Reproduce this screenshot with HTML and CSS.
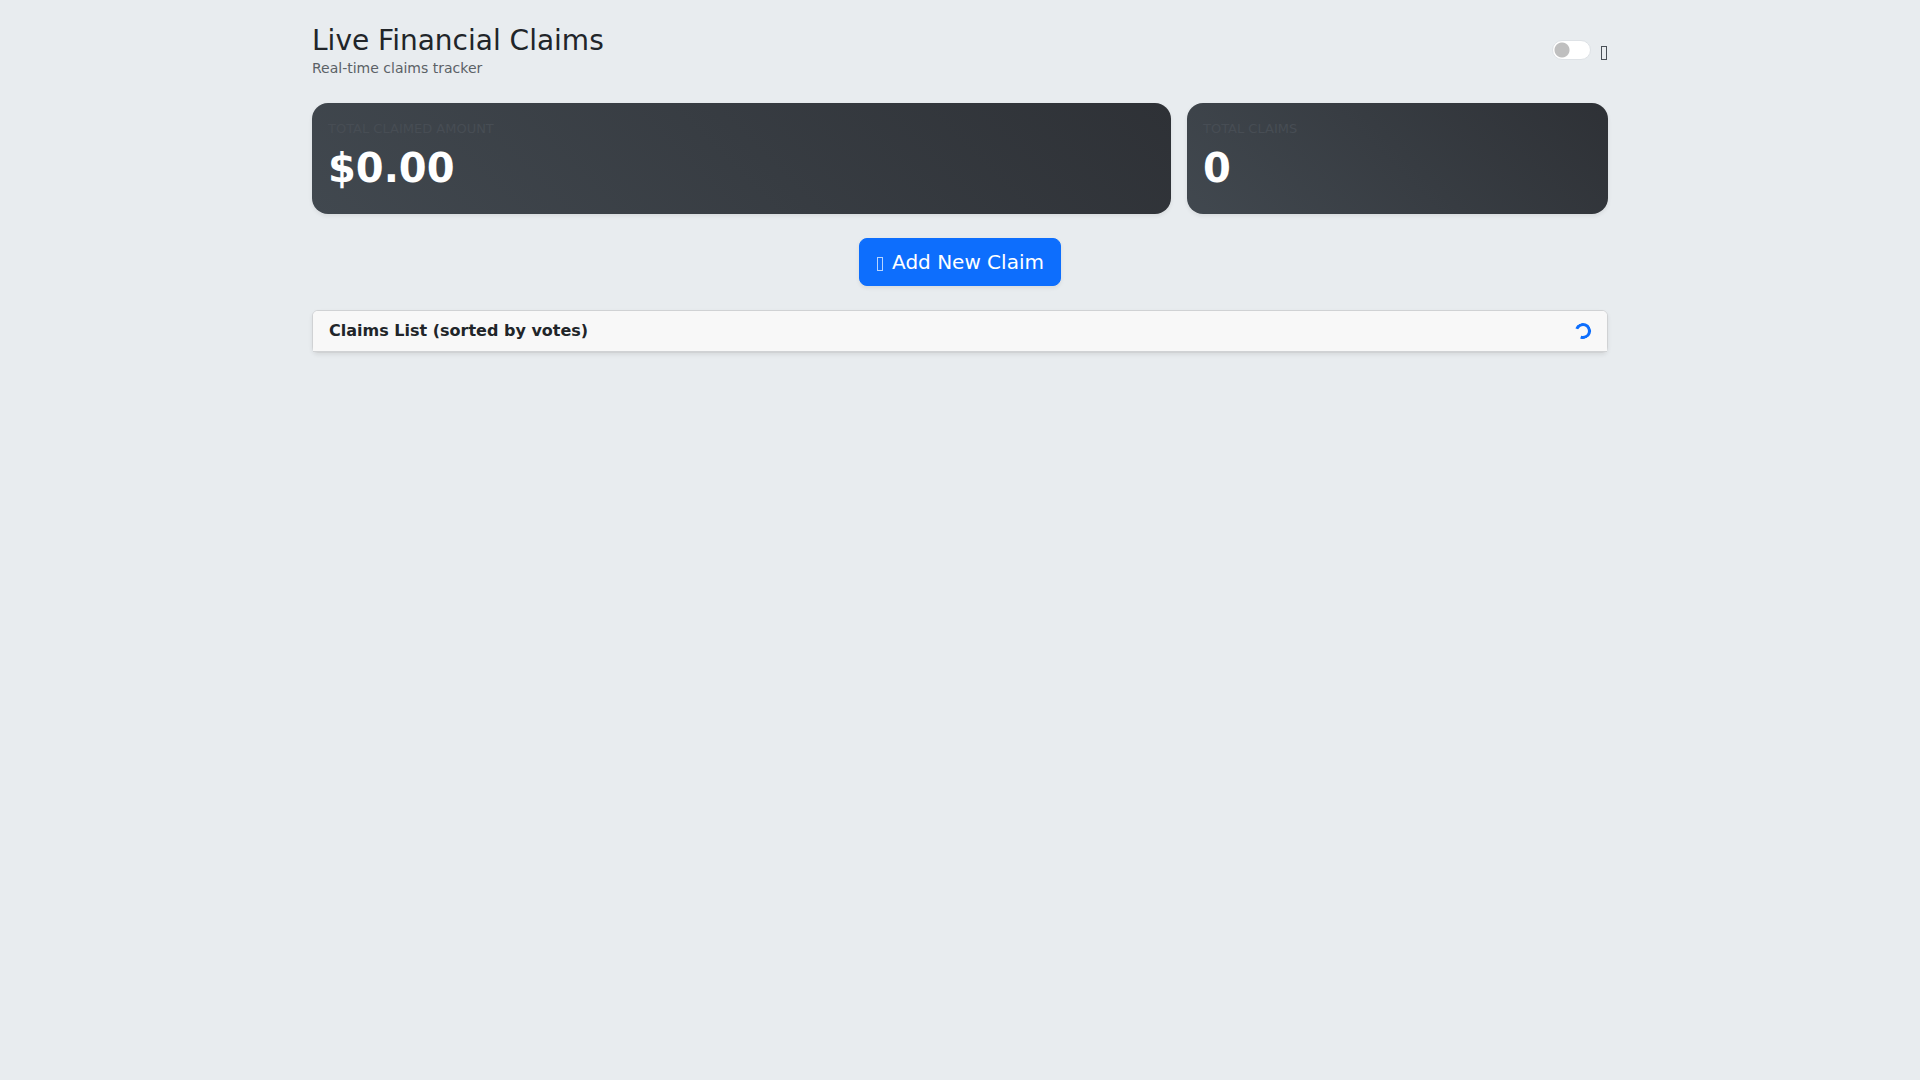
FILE: index.html
```
<!DOCTYPE html>
<html lang="en">
<head>
  <meta charset="UTF-8">
  <meta name="viewport" content="width=device-width, initial-scale=1.0">
  <title>Live Financial Claims</title>
  <link rel="stylesheet" href="styles.css">
</head>
<body>
  <div class="container">
    <header class="page-header">
      <div>
        <h1>Live Financial Claims</h1>
        <p class="subtitle">Real-time claims tracker</p>
      </div>
      <div class="theme-switch">
        <input type="checkbox" role="switch" id="theme-toggle" aria-label="Dark mode">
        <label for="theme-toggle">
          <svg class="icon" width="7" height="14" viewBox="0 0 7 14"><rect x="0.5" y="0.5" width="5" height="13" fill="none" stroke="currentColor"/></svg>
        </label>
      </div>
    </header>

    <main>
      <section class="stats">
        <div class="stat-card">
          <div class="stat-label">TOTAL CLAIMED AMOUNT</div>
          <div class="stat-value" id="total-amount">$0.00</div>
        </div>
        <div class="stat-card">
          <div class="stat-label">TOTAL CLAIMS</div>
          <div class="stat-value" id="total-claims">0</div>
        </div>
      </section>

      <div class="actions">
        <button type="button" class="btn-add">
          <svg class="icon" width="8" height="14" viewBox="0 0 8 14"><rect x="1.5" y="0.5" width="5" height="13" fill="none" stroke="currentColor" stroke-opacity="0.7"/></svg>
          Add New Claim
        </button>
      </div>

      <section class="claims-card">
        <div class="claims-header">
          <h2>Claims List (sorted by votes)</h2>
          <div class="spinner" role="status" aria-label="Loading"></div>
        </div>
        <div id="claims-list"></div>
      </section>
    </main>
  </div>
</body>
</html>
```

FILE: styles.css
```
* {
  box-sizing: border-box;
}
body {
  margin: 0;
  min-height: 100vh;
  font-family: "DejaVu Sans", sans-serif;
  font-size: 16px;
  line-height: 24px;
  color: #212529;
  background-color: #e8ecef;
}
h1, h2, p {
  margin: 0;
}
.container {
  max-width: 1320px;
  margin: 0 auto;
  padding: 24px 12px;
}
.icon {
  display: block;
}

/* Header */
.page-header {
  display: flex;
  justify-content: space-between;
  align-items: center;
  margin-bottom: 24px;
}
h1 {
  font-size: 28px;
  font-weight: 400;
  line-height: 34px;
}
.subtitle {
  font-size: 14px;
  line-height: 21px;
  color: #5b6166;
}
.theme-switch {
  display: flex;
  align-items: flex-end;
  gap: 10px;
  padding-bottom: 3px;
}
.theme-switch input {
  appearance: none;
  width: 39px;
  height: 20px;
  margin: 0;
  border: 1px solid #dee2e6;
  border-radius: 20px;
  background: #fff radial-gradient(circle at 9px 9px, #bfbfbf 7px, transparent 8px) no-repeat;
  cursor: pointer;
}
.theme-switch input:checked {
  background: #0d6efd radial-gradient(circle at 28px 9px, #fff 7px, transparent 8px) no-repeat;
}
.theme-switch label {
  color: #495057;
}

/* Totals */
.stats {
  display: grid;
  grid-template-columns: 859fr 421fr;
  gap: 16px;
  margin-bottom: 24px;
}
.stat-card {
  padding: 16px;
  border-radius: 16px;
  color: #fff;
  background: linear-gradient(45deg, #41484f, #2e3136);
  box-shadow: 0 2px 4px rgba(0, 0, 0, 0.075);
}
.stat-label {
  font-size: 13px;
  line-height: 19px;
  color: #474d54;
}
.stat-value {
  font-size: 40px;
  font-weight: 700;
  line-height: 60px;
}

/* Add button */
.actions {
  display: flex;
  justify-content: center;
  margin-bottom: 24px;
}
.btn-add {
  display: flex;
  align-items: center;
  gap: 8px;
  padding: 8px 16px;
  border: 1px solid #0d6efd;
  border-radius: 8px;
  font-family: inherit;
  font-size: 20px;
  line-height: 30px;
  color: #fff;
  background-color: #0d6efd;
  box-shadow: 0 2px 4px rgba(0, 0, 0, 0.075);
  cursor: pointer;
}
.btn-add:hover {
  background-color: #0b5ed7;
}
.btn-add .icon {
  margin-top: 4px;
}

/* Claims list */
.claims-card {
  border: 1px solid #d0d2d4;
  border-radius: 6px;
  background-color: #fff;
  box-shadow: 0 2px 4px rgba(0, 0, 0, 0.075);
}
.claims-header {
  display: flex;
  justify-content: space-between;
  align-items: center;
  padding: 8px 16px;
  border-bottom: 1px solid #d0d2d4;
  border-radius: 5px 5px 0 0;
  background-color: #f8f8f8;
}
h2 {
  font-size: 16px;
  font-weight: 700;
  line-height: 24px;
}
.spinner {
  width: 16px;
  height: 16px;
  border: 3px solid #0d6efd;
  border-left-color: transparent;
  border-radius: 50%;
  transform: rotate(-25deg);
}
```
